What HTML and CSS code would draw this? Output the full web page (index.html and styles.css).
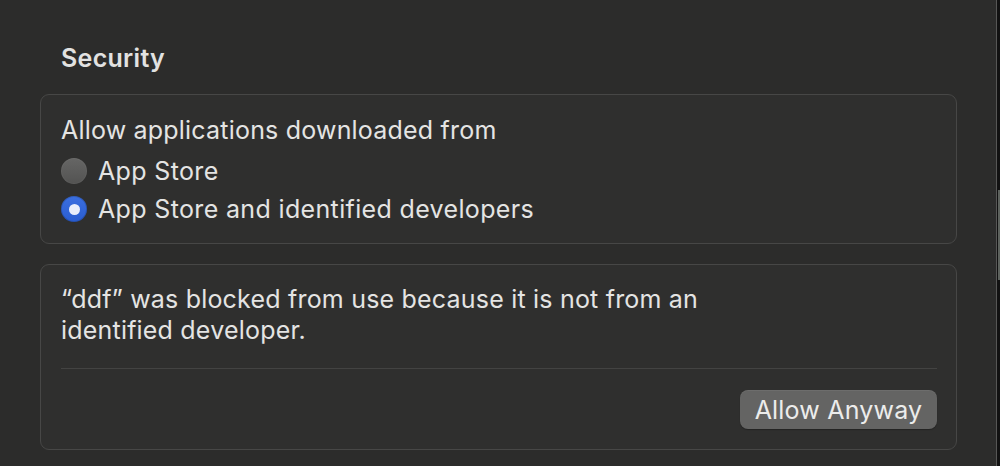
FILE: index.html
```html
<!DOCTYPE html>
<html>
<head>
<meta charset="utf-8">
<link rel="stylesheet" href="styles.css">
</head>
<body>
<div class="window">
  <main class="content">
    <h2 class="title">Security</h2>
    <section class="box box-allow">
      <div class="heading">Allow applications downloaded from</div>
      <div class="radio-row"><span class="radio"></span><span>App Store</span></div>
      <div class="radio-row"><span class="radio checked"></span><span>App Store and identified developers</span></div>
    </section>
    <section class="box box-blocked">
      <p class="message">“ddf” was blocked from use because it is not from an<br>identified developer.</p>
      <div class="divider"></div>
      <div class="actions"><button class="btn">Allow Anyway</button></div>
    </section>
  </main>
  <div class="edge"><div class="thumb"></div></div>
</div>
</body>
</html>
```

FILE: styles.css
```css
html, body {
  margin: 0;
  padding: 0;
  height: 100%;
  background: #2c2c2b;
}
body {
  font-family: Inter, "Helvetica Neue", "Liberation Sans", sans-serif;
  color: #e4e4e3;
  overflow: hidden;
}
.window {
  display: flex;
  height: 466px;
}
.content {
  flex: 1;
  padding: 0 39px 0 40px;
}
.title {
  margin: 0;
  padding: 43px 0 0 21px;
  height: 94px;
  box-sizing: border-box;
  font-size: 25px;
  font-weight: 600;
  line-height: 30px;
  color: #e2e2e1;
  letter-spacing: 0.3px;
}
.box {
  border: 1px solid #474746;
  border-radius: 9px;
  background: #2f2f2e;
  box-sizing: border-box;
}
.box-allow {
  height: 150px;
  padding: 16px 19px 0 20px;
}
.heading, .radio-row, .message, .btn {
  font-size: 25px;
  letter-spacing: 0.2px;
}
.radio-row { letter-spacing: 0.35px; }
.heading {
  line-height: 38px;
}
.radio-row {
  display: flex;
  align-items: center;
  gap: 11px;
  height: 38px;
}
.heading + .radio-row { margin-top: 3px; }
.radio {
  width: 26px;
  height: 26px;
  border-radius: 50%;
  background: linear-gradient(#666665, #535352);
  box-shadow: inset 0 0 0 1px rgba(255,255,255,0.04);
  display: flex;
  align-items: center;
  justify-content: center;
  flex: none;
}
.radio.checked {
  background: linear-gradient(#3b6fe0, #2a5dd0);
  box-shadow: inset 0 0 0 1px rgba(0,0,0,0.15);
}
.radio.checked::after {
  content: "";
  width: 11px;
  height: 11px;
  border-radius: 50%;
  background: #e9eefb;
}
.box-blocked {
  margin-top: 20px;
  height: 186px;
  padding: 19px 19px 0 20px;
}
.message {
  margin: 0;
  line-height: 31px;
}
.divider {
  height: 1px;
  background: #434342;
  margin-top: 22px;
}
.actions {
  display: flex;
  justify-content: flex-end;
  margin-top: 21px;
}
.btn {
  font-family: inherit;
  color: #ececeb;
  background: #646463;
  border: none;
  border-radius: 8px;
  height: 39px;
  width: 197px;
  padding: 0;
  box-shadow: 0 1px 1px rgba(0,0,0,0.25), inset 0 1px 0 rgba(255,255,255,0.06);
}
.edge {
  width: 4px;
  flex: none;
  border-left: 1px solid #575756;
  background: #121212;
  box-sizing: border-box;
}
.thumb {
  margin: 190px 0 0 1px;
  width: 2px;
  height: 90px;
  background: #5d625d;
}
```
